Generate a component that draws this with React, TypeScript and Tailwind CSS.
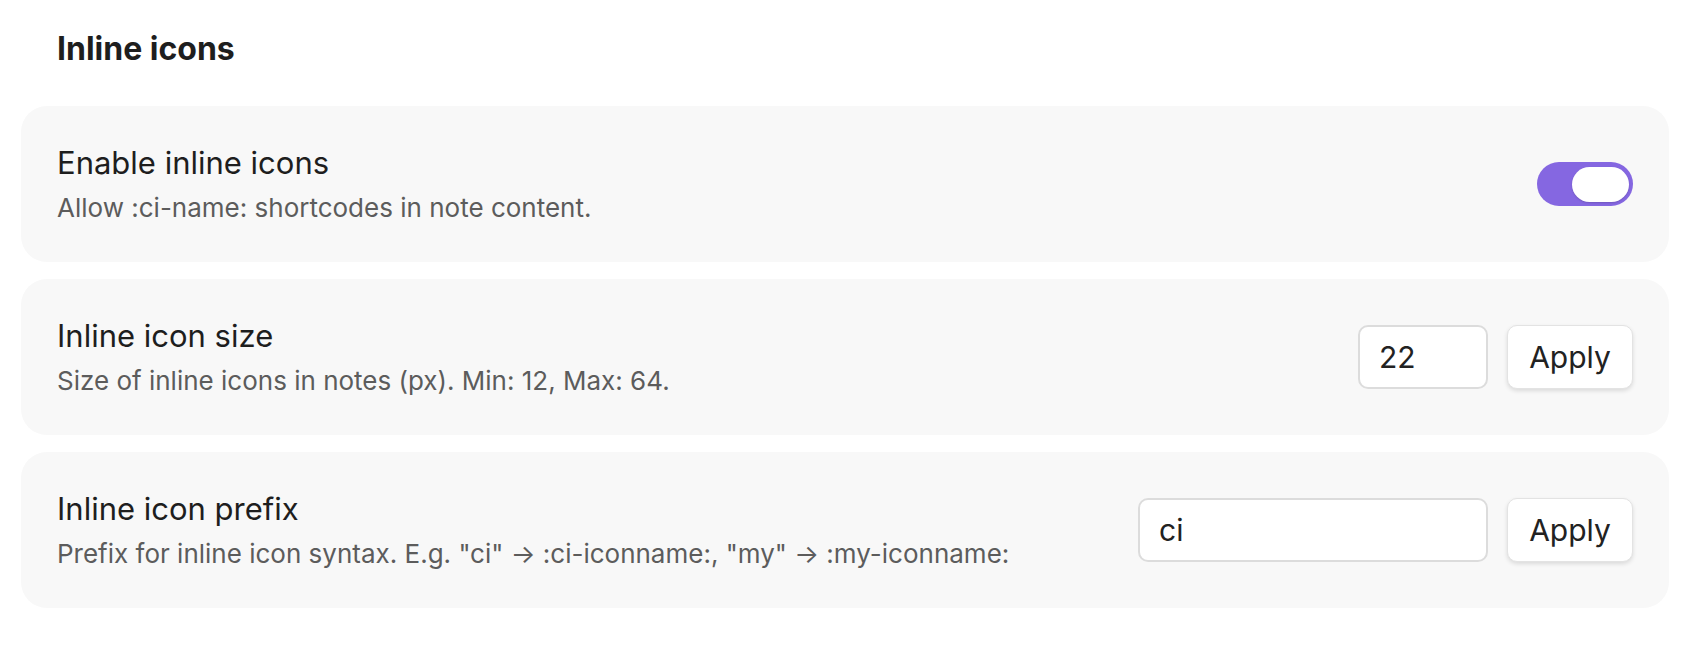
import React from 'react';

const font = { fontFamily: 'Inter, "Noto Sans", sans-serif' };

const Toggle: React.FC<{ on: boolean }> = ({ on }) => (
  <div
    className={
      on
        ? 'flex h-[44px] w-[96px] items-center justify-end rounded-full bg-[#8567e1] px-[4px]'
        : 'flex h-[44px] w-[96px] items-center justify-start rounded-full bg-[#d4d4d4] px-[4px]'
    }
  >
    <div className="h-[35px] w-[57px] rounded-full bg-white shadow-[0_1px_2px_rgba(0,0,0,0.15)]" />
  </div>
);

const ApplyButton = () => (
  <button className="h-[64px] w-[126px] rounded-[10px] border border-[#e3e3e3] bg-white text-[30px] text-[#222] shadow-[0_2px_4px_rgba(0,0,0,0.12)]">
    Apply
  </button>
);

const Row: React.FC<{ title: string; desc: string; children: React.ReactNode }> = ({ title, desc, children }) => (
  <div className="flex h-[156px] items-center justify-between rounded-[26px] bg-[#f8f8f8] px-[36px]">
    <div className="flex flex-col pt-[2px]">
      <div className="text-[31px] leading-[39px] text-[#1e1e1e]">{title}</div>
      <div className="mt-[6px] text-[26px] leading-[39px] text-[#5c5c5c]">{desc}</div>
    </div>
    <div className="flex items-center gap-[19px]">{children}</div>
  </div>
);

export default function App() {
  return (
    <div className="min-h-screen bg-white pl-[21px] pr-[39px] pt-[29px]" style={font}>
      <h2 className="pl-[36px] text-[32px] font-bold leading-[40px] text-[#1e1e1e]">Inline icons</h2>
      <div className="mt-[37px] flex flex-col gap-[17px]">
        <Row title="Enable inline icons" desc="Allow :ci-name: shortcodes in note content.">
          <Toggle on={true} />
        </Row>
        <Row title="Inline icon size" desc="Size of inline icons in notes (px). Min: 12, Max: 64.">
          <input
            readOnly
            value="22"
            className="h-[64px] w-[130px] rounded-[10px] border-2 border-[#dcdcdc] bg-white pl-[19px] text-[30px] text-[#222] outline-none"
          />
          <ApplyButton />
        </Row>
        <Row
          title="Inline icon prefix"
          desc={'Prefix for inline icon syntax. E.g. "ci" \u2192 :ci-iconname:, "my" \u2192 :my-iconname:'}
        >
          <input
            readOnly
            value="ci"
            className="h-[64px] w-[350px] rounded-[10px] border-2 border-[#dcdcdc] bg-white pl-[19px] text-[30px] text-[#222] outline-none"
          />
          <ApplyButton />
        </Row>
      </div>
    </div>
  );
}
